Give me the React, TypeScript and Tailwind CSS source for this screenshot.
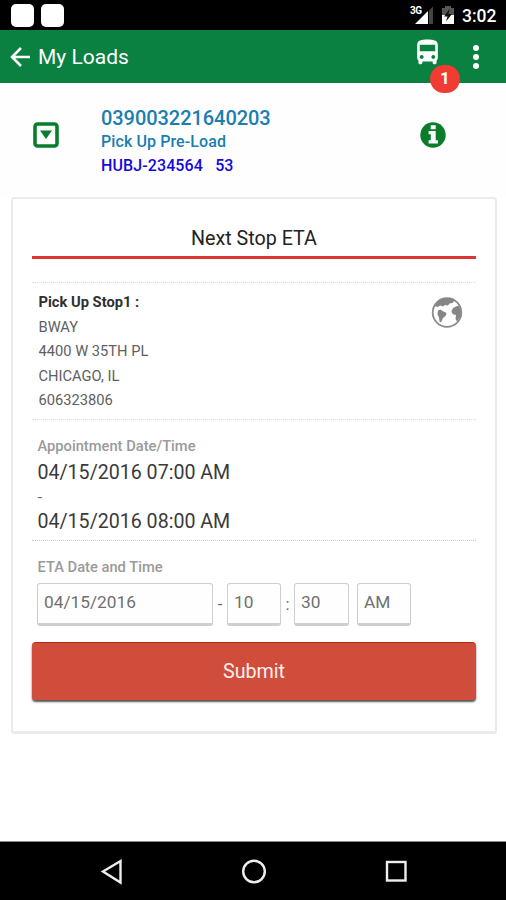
import { MdDirectionsBus } from "react-icons/md";

const address = ["BWAY", "4400 W 35TH PL", "CHICAGO, IL", "606323806"];

const StatusBar = () => (
  <div className="flex h-[30px] items-center bg-black pl-[11px] pr-[9px] text-white">
    <span className="h-[23px] w-[23px] rounded-[5px] bg-white" />
    <span className="ml-[7px] h-[23px] w-[23px] rounded-[5px] bg-white" />
    <div className="ml-auto flex items-center">
      <div className="relative h-[20px] w-[26px]">
        <span className="absolute left-0 top-0 text-[10px] font-bold leading-[11px] tracking-[-0.5px]">3G</span>
        <svg className="absolute left-[4px] top-[1px]" width="20" height="19" viewBox="0 0 20 19">
          <path d="M15 4.500 19 .5V18h-4z" fill="#444" />
          <path d="M1 18 14 5v13z" fill="#fff" />
        </svg>
      </div>
      <svg className="ml-[5px]" width="14" height="20" viewBox="0 0 14 20">
        <path d="M4 1h6v2h3v8H1V3h3z" fill="#555" />
        <path d="M1 10h12v9H1z" fill="#fff" />
        <path d="M8.500 4 3 11.500h3.500L5 16.500 11 9H7.500z" fill="#111" />
      </svg>
      <span className="ml-[7px] mt-[2px] w-[35px] whitespace-nowrap text-[17.500px] font-medium leading-[20px]">3:02</span>
    </div>
  </div>
);

const Header = () => (
  <header className="flex h-[53px] items-center bg-[#0a8041] pl-[10px] text-white">
    <svg width="21" height="20" viewBox="0 0 21 20" fill="none" stroke="#fff" strokeWidth="2.500">
      <path d="M20 10H2M11 1 2 10l9 9" />
    </svg>
    <h1 className="ml-[7px] text-[21px] leading-[26px]">My Loads</h1>
    <div className="relative ml-auto mr-[30px] h-[26px] w-[28px]">
      <MdDirectionsBus size={31} className="-ml-[3px] -mt-[7px] max-w-none" />
      <span className="absolute left-[15px] top-[21px] flex h-[28px] w-[30px] items-center justify-center rounded-full bg-[#f03c32] text-[17px] font-bold">
        1
      </span>
    </div>
    <div className="mr-[27px] flex flex-col gap-[3px]">
      <span className="h-[6px] w-[6px] rounded-full bg-white" />
      <span className="h-[6px] w-[6px] rounded-full bg-white" />
      <span className="h-[6px] w-[6px] rounded-full bg-white" />
    </div>
  </header>
);

const LoadRow = () => (
  <section className="flex h-[114px] bg-[#fefefe]">
    <svg className="ml-[33px] mt-[39px]" width="26" height="26" viewBox="0 0 26 26">
      <rect x="2" y="2" width="22" height="22" rx="2.500" fill="none" stroke="#0a7d2c" strokeWidth="3.600" />
      <path d="M7 8.500h12l-6 8.500z" fill="#0a7d2c" />
    </svg>
    <div className="ml-[42px] mt-[23px] w-[319px] font-medium">
      <div className="text-[20px] leading-[24px] tracking-[-0.06px] text-[#1b7eb0]">039003221640203</div>
      <div className="text-[16px] leading-[23px] tracking-[0.1px] text-[#1b7eb0]">Pick Up Pre-Load</div>
      <div className="whitespace-pre text-[16px] leading-[26px] tracking-[0.1px] text-[#1508dc]">HUBJ-234564   53</div>
    </div>
    <svg className="mt-[39px]" width="26" height="26" viewBox="0 0 26 26">
      <circle cx="13" cy="13" r="12.700" fill="#0a7d2c" />
      <path d="M10.700 3.200h5v4h-5zM8.600 9h7.100v9.300h2.200v3.200H8.600v-3.200h2.200v-6H8.600z" fill="#fff" />
    </svg>
  </section>
);

const GlobeIcon = () => (
  <svg width="32" height="32" viewBox="0 0 32 32" className="mr-[13px] mt-[13px]">
    <circle cx="16" cy="16.500" r="14.300" fill="none" stroke="#8b8b8b" strokeWidth="1.800" />
    <g fill="#868686">
      <path d="M3.500 10 8 4.500 14 2l7 .5 3 1.500-2.500 3-3 .5-1.500 2-3-.5-2 1.500-2.500-1-3 1.500z" />
      <path d="M7 14.500l2.500-1 2 1.500 4 2-.5 2.500-3 2.500-2 4.500-1.500-1-.5-4-1.500-3z" />
      <path d="M20.500 15l1.500-3 3-1.500 2.500-1 2.500 5-.5 6-3.500 5-1.500-2.500.5-4-2.500-.5-1.500-1.500z" />
    </g>
  </svg>
);

type FieldProps = { value: string; className: string };

const Field = ({ value, className }: FieldProps) => (
  <div
    className={`flex h-[43px] items-center rounded-[3px] border border-b-[3px] border-[#cecece] bg-[#fefefe] pb-px pl-[6px] text-[17.300px] text-[#707070] ${className}`}
  >
    {value}
  </div>
);

const EtaCard = () => (
  <section className="ml-[11px] mr-[9px] h-[537px] rounded-[3px] border-2 border-b-[3px] border-[#ebebeb] bg-white px-[19px]">
    <h2 className="h-[60px] border-b-[3px] border-[#dc3535] pt-[26px] text-center text-[19.700px] leading-[28px] text-[#222]">
      Next Stop ETA
    </h2>

    <div className="mt-[23px] flex h-[138px] justify-between border-y border-dotted border-[#dcdcdc]">
      <div className="pl-[6.500px] pt-[7px] text-[14.700px] leading-[24.500px] text-[#606060]">
        <div className="font-bold text-[#303030]">Pick Up Stop1 :</div>
        {address.map((line) => (
          <div key={line}>{line}</div>
        ))}
      </div>
      <GlobeIcon />
    </div>

    <div className="h-[121px] border-b border-dotted border-[#c8c8c8] pl-[5.500px] pt-[14px]">
      <div className="text-[14.700px] font-medium leading-[25px] text-[#9a9a9a]">Appointment Date/Time</div>
      <div className="pt-[2px] text-[19.600px] leading-[24.500px] text-[#3a3a3a]">
        <div>04/15/2016 07:00 AM</div>
        <div className="-mt-px mb-px text-[17px] text-[#777]">-</div>
        <div>04/15/2016 08:00 AM</div>
      </div>
    </div>

    <div className="pl-[5px] pt-[14px]">
      <div className="pl-[0.500px] text-[14.700px] font-medium leading-[24px] text-[#9a9a9a]">ETA Date and Time</div>
      <div className="mt-[4px] flex items-center text-[17px] text-[#686868]">
        <Field value="04/15/2016" className="w-[176px]" />
        <span className="w-[14px] text-center">-</span>
        <Field value="10" className="w-[54px]" />
        <span className="w-[13px] text-center">:</span>
        <Field value="30" className="w-[55px]" />
        <Field value="AM" className="ml-[8px] w-[54px]" />
      </div>
    </div>

    <button className="mt-[16px] block h-[58px] w-full rounded-[4px] border-t border-[#bd2510] bg-[#d04d3c] text-[19.700px] text-[#fff0ed] shadow-[0_2px_2px_#555]">
      Submit
    </button>
  </section>
);

const NavBar = () => (
  <nav className="mt-auto h-[59px] border-t border-[#888] bg-black">
    <svg width="506" height="58" viewBox="0 0 506 58" fill="none" stroke="#eee" strokeWidth="2.400">
      <path d="M120.500 19v21.500L103 29.500z" />
      <circle cx="254" cy="29.500" r="10.800" />
      <rect x="387" y="20" width="18.500" height="18.500" />
    </svg>
  </nav>
);

const App = () => {
  return (
    <div className="flex h-[900px] w-[506px] flex-col overflow-hidden bg-white font-[Roboto,sans-serif]">
      <StatusBar />
      <Header />
      <LoadRow />
      <EtaCard />
      <NavBar />
    </div>
  );
};

export default App;
